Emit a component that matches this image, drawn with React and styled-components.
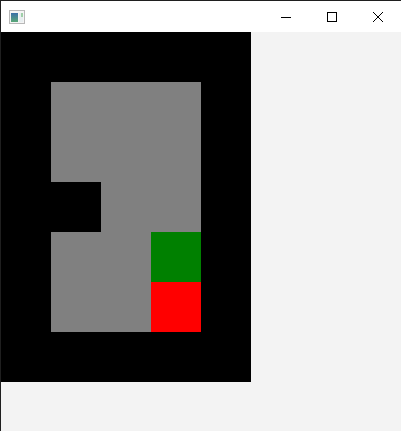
import React from 'react';
import styled, { createGlobalStyle } from 'styled-components';

const GlobalStyle = createGlobalStyle`
  html, body {
    margin: 0;
    padding: 0;
    background: #f3f3f3;
    font-family: "Segoe UI", "Noto Sans", sans-serif;
  }
`;

const cellColors = {
  0: '#000000',
  1: '#808080',
  2: '#008000',
  3: '#ff0000',
};

const level = [
  [0, 0, 0, 0, 0],
  [0, 1, 1, 1, 0],
  [0, 1, 1, 1, 0],
  [0, 0, 1, 1, 0],
  [0, 1, 1, 2, 0],
  [0, 1, 1, 3, 0],
  [0, 0, 0, 0, 0],
];

const Window = styled.div`
  width: 401px;
  height: 431px;
  box-sizing: border-box;
  border-top: 1px solid #1f1f1f;
  border-left: 1px solid #1f1f1f;
  background: #f3f3f3;
  display: flex;
  flex-direction: column;
`;

const TitleBar = styled.div`
  height: 31px;
  background: #ffffff;
  display: flex;
  align-items: center;
  flex-shrink: 0;
`;

const AppIcon = styled.div`
  width: 30px;
  padding-left: 8px;
  display: flex;
  align-items: center;
`;

const Spacer = styled.div`
  flex: 1;
`;

const CaptionButton = styled.div`
  width: 46px;
  height: 31px;
  display: flex;
  align-items: center;
  justify-content: center;
`;

const Board = styled.div`
  display: grid;
  grid-template-columns: repeat(5, 50px);
  grid-auto-rows: 50px;
  width: 250px;
`;

const Cell = styled.div`
  background: ${props => props.$color};
`;

function App() {
  return (
    <>
      <GlobalStyle />
      <Window>
        <TitleBar>
          <AppIcon>
            <svg width="16" height="14" viewBox="0 0 16 14">
              <defs>
                <linearGradient id="g" x1="0" y1="0" x2="0" y2="1">
                  <stop offset="0" stopColor="#3a6fa8" />
                  <stop offset="1" stopColor="#5aa877" />
                </linearGradient>
              </defs>
              <rect x="0.5" y="0.5" width="15" height="13" fill="#f4f4f4" stroke="#b8b8b8" />
              <rect x="2" y="3" width="7" height="9" fill="url(#g)" />
              <rect x="10" y="3" width="4" height="9" fill="#e8eef0" />
              <rect x="12" y="3" width="2" height="4" fill="#9fcfa8" />
            </svg>
          </AppIcon>
          <Spacer />
          <CaptionButton>
            <svg width="10" height="10" viewBox="0 0 10 10">
              <line x1="0" y1="5.5" x2="10" y2="5.5" stroke="#000" strokeWidth="1" />
            </svg>
          </CaptionButton>
          <CaptionButton>
            <svg width="10" height="10" viewBox="0 0 10 10">
              <rect x="0.5" y="0.5" width="9" height="9" fill="none" stroke="#000" strokeWidth="1" />
            </svg>
          </CaptionButton>
          <CaptionButton>
            <svg width="10" height="10" viewBox="0 0 10 10">
              <path d="M0 0 L10 10 M10 0 L0 10" stroke="#000" strokeWidth="1" />
            </svg>
          </CaptionButton>
        </TitleBar>
        <Board>
          {level.flat().map((v, i) => (
            <Cell key={i} $color={cellColors[v]} />
          ))}
        </Board>
      </Window>
    </>
  );
}

export default App;
